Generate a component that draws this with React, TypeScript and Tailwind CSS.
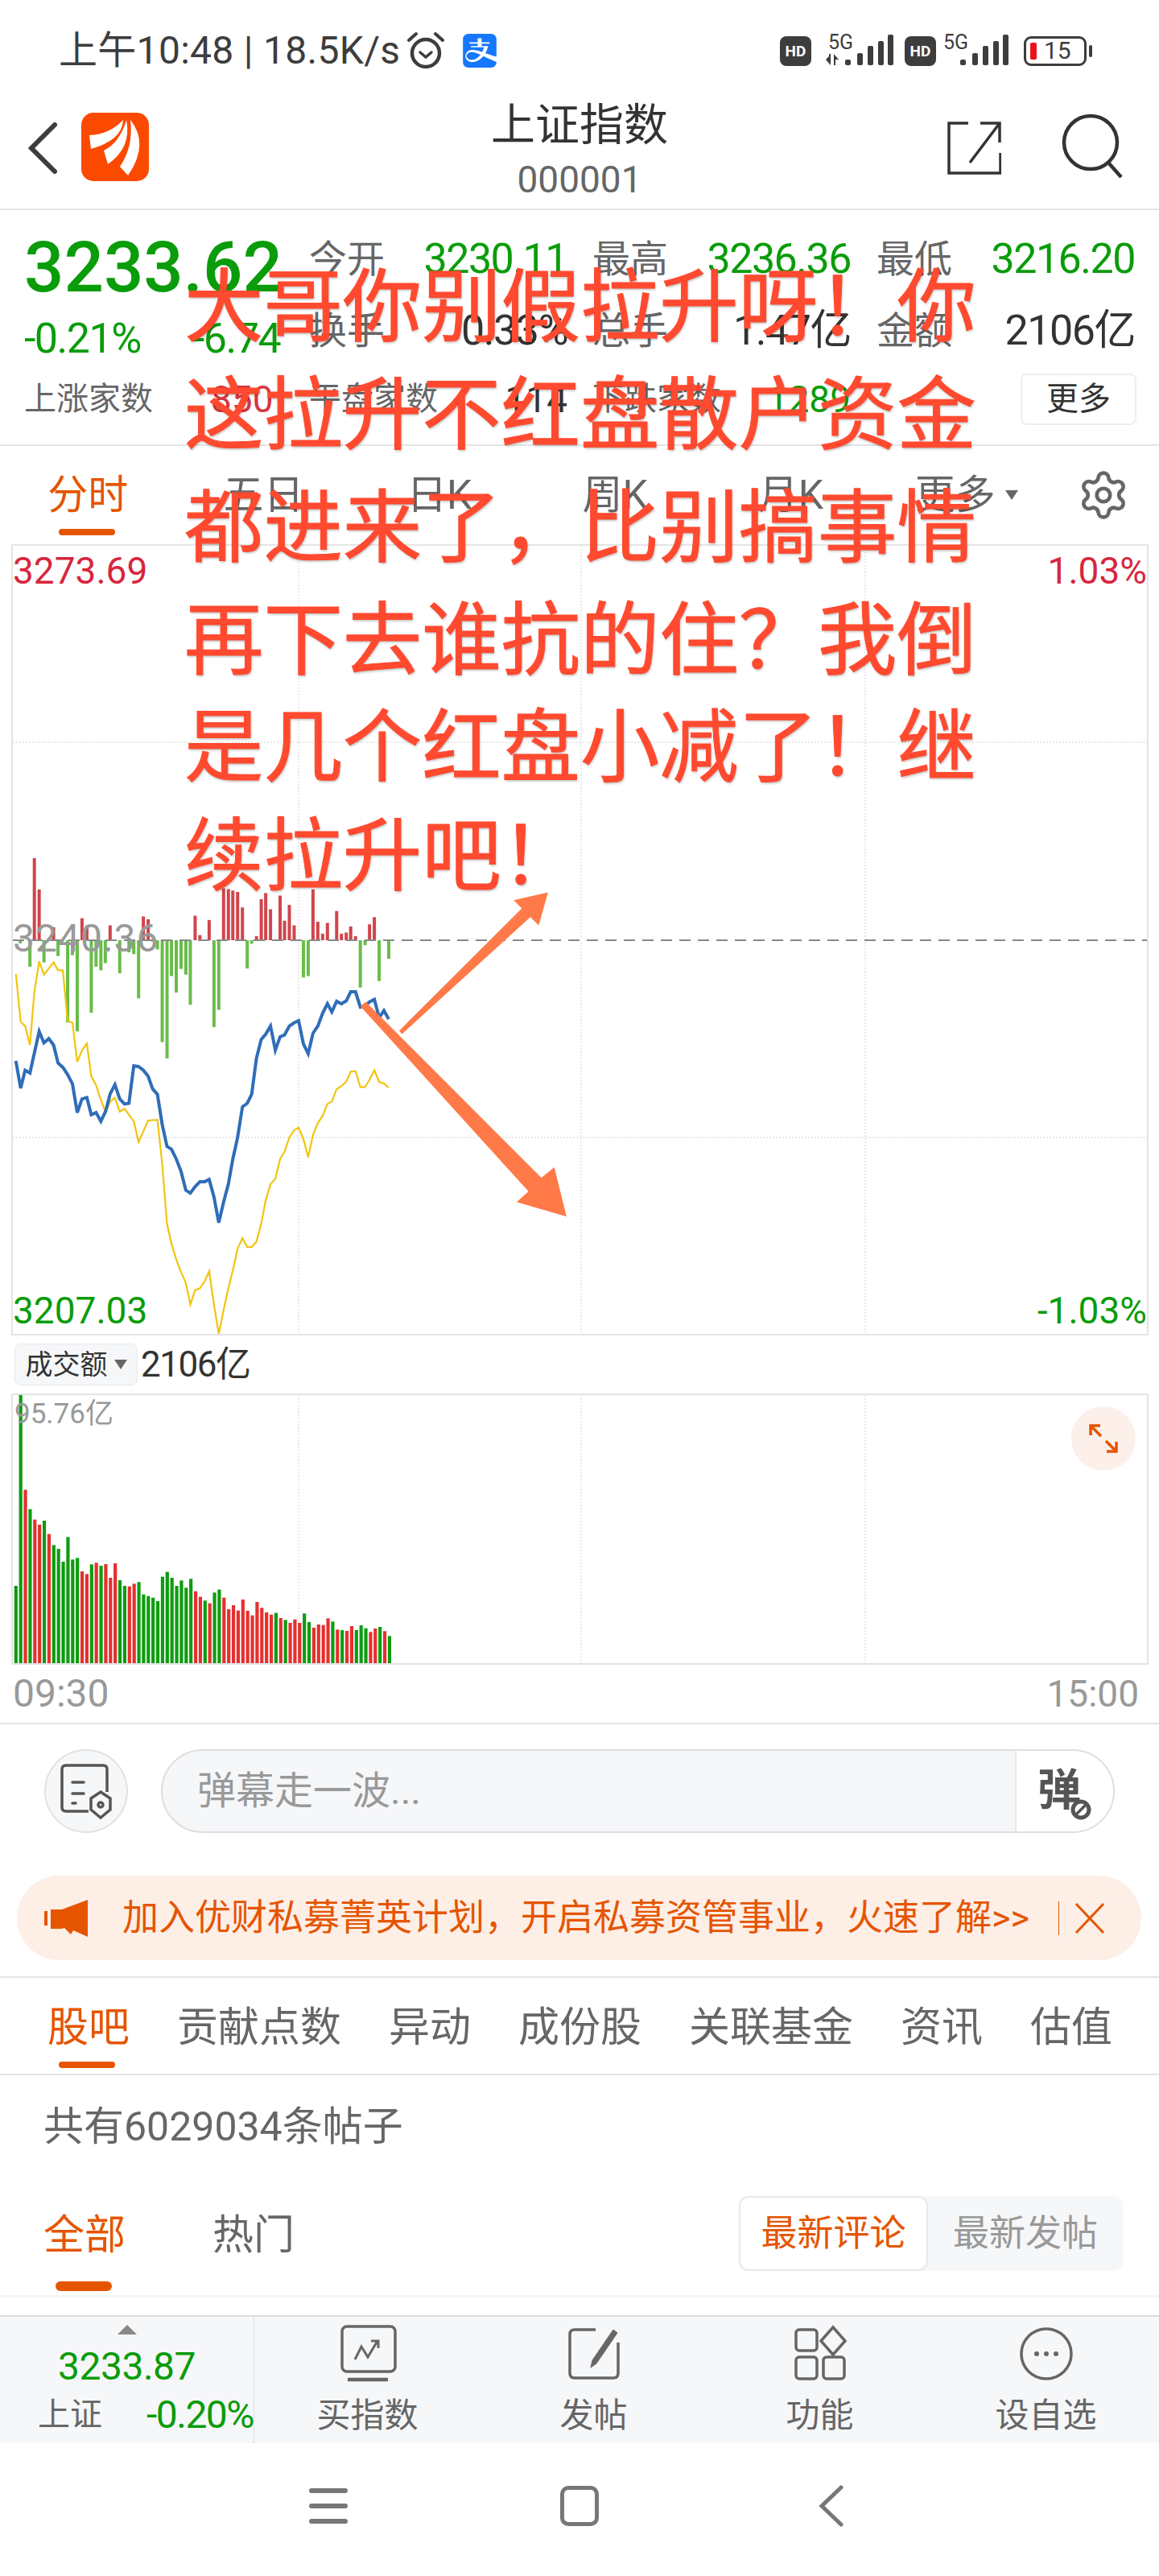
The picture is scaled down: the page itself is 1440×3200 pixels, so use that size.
import { Settings } from "lucide-react";
import { SiAlipay } from "react-icons/si";

/* ------------------------------------------------------------------ */
/*  Chart data, in page pixels after the sx / sy helpers                */
/* ------------------------------------------------------------------ */

const sx = (x: number) => x / 2.178;
const sy = (y: number) => 1000 + y / 2.24;

const bluePts = [
  [43, 712], [56, 788], [68, 738], [81, 746], [93, 690], [106, 630], [119, 662], [132, 650], [145, 668], [157, 718],
  [170, 730], [183, 750], [196, 776], [209, 856], [222, 818], [235, 814], [247, 862], [260, 856], [273, 880], [286, 852],
  [298, 804], [311, 778], [324, 818], [337, 832], [349, 830], [362, 726], [375, 728], [388, 738], [401, 755], [413, 790],
  [426, 805], [439, 890], [452, 950], [464, 958], [477, 985], [490, 1020], [503, 1072], [515, 1080], [528, 1062], [541, 1048],
  [554, 1048], [566, 1042], [579, 1090], [592, 1162], [605, 1105], [618, 1055], [630, 985], [643, 925], [656, 840], [669, 830],
  [681, 805], [694, 705], [707, 652], [719, 638], [732, 615], [745, 682], [758, 645], [770, 640], [783, 615], [796, 606],
  [808, 600], [821, 665], [834, 692], [847, 635], [860, 615], [873, 580], [886, 553], [898, 576], [911, 546], [924, 553],
  [937, 545], [949, 520], [962, 520], [975, 562], [988, 560], [1000, 548], [1013, 541], [1026, 592], [1039, 572], [1052, 596],
];

const yellowPts = [
  [43, 470], [56, 603], [68, 615], [81, 668], [93, 520], [106, 435], [119, 472], [132, 455], [145, 438], [157, 460],
  [170, 460], [183, 600], [196, 606], [209, 715], [222, 682], [235, 664], [247, 755], [260, 780], [273, 820], [286, 856],
  [298, 825], [311, 815], [324, 853], [337, 845], [349, 862], [362, 880], [375, 938], [388, 908], [401, 878], [413, 877],
  [426, 876], [439, 1000], [452, 1165], [464, 1220], [477, 1265], [490, 1300], [503, 1330], [515, 1390], [528, 1350], [541, 1345],
  [554, 1325], [566, 1297], [579, 1390], [592, 1472], [605, 1405], [618, 1345], [630, 1295], [643, 1235], [656, 1205], [669, 1230],
  [681, 1230], [694, 1215], [707, 1165], [719, 1100], [732, 1055], [745, 1040], [758, 985], [770, 965], [783, 925], [796, 905],
  [808, 898], [821, 930], [834, 980], [847, 918], [860, 885], [873, 865], [886, 832], [898, 825], [911, 790], [924, 782],
  [937, 770], [949, 742], [962, 740], [975, 785], [988, 785], [1000, 765], [1013, 738], [1026, 770], [1039, 775], [1052, 787],
];

const redBars = [
  [93, 148], [106, 235], [145, 340], [222, 315], [235, 335], [298, 335], [388, 310], [401, 318], [528, 308], [541, 362],
  [566, 320], [605, 232], [618, 234], [630, 238], [643, 242], [656, 285], [694, 365], [707, 262], [719, 245], [732, 290],
  [758, 252], [770, 322], [783, 278], [796, 335], [847, 235], [860, 325], [873, 358], [886, 328], [911, 295], [924, 358],
  [937, 355], [949, 338], [962, 365], [1000, 332], [1013, 312],
];

const greenBars = [
  [55, 385], [81, 450], [119, 438], [157, 420], [183, 605], [196, 418], [209, 630], [247, 578], [260, 450], [273, 460],
  [285, 440], [324, 468], [349, 410], [362, 415], [375, 538], [413, 380], [426, 402], [439, 660], [452, 705], [464, 476],
  [477, 522], [490, 456], [503, 472], [515, 556], [579, 618], [592, 570], [669, 455], [681, 386], [821, 480], [834, 476],
  [975, 508], [988, 390], [1026, 490], [1052, 428],
];

// top of each volume bar as read off the crop, g = green, r = red
const volumes: [number, "g" | "r"][] = [
  [990, "g"], [275, "g"], [632, "r"], [704, "g"], [743, "r"], [762, "r"], [747, "g"], [797, "r"], [838, "g"], [852, "g"],
  [900, "g"], [808, "g"], [892, "g"], [886, "g"], [936, "r"], [946, "r"], [910, "g"], [904, "r"], [915, "g"], [909, "r"],
  [960, "r"], [906, "r"], [969, "g"], [990, "g"], [992, "r"], [982, "r"], [976, "g"], [1022, "g"], [1028, "g"], [1034, "g"],
  [1047, "g"], [956, "g"], [938, "g"], [960, "g"], [990, "g"], [970, "g"], [997, "g"], [964, "g"], [1010, "r"], [1031, "r"],
  [1045, "g"], [1055, "r"], [1015, "g"], [1004, "g"], [1034, "r"], [1077, "r"], [1062, "r"], [1082, "r"], [1041, "r"], [1083, "r"],
  [1100, "r"], [1050, "r"], [1072, "r"], [1089, "r"], [1097, "r"], [1091, "g"], [1110, "r"], [1117, "g"], [1128, "r"], [1115, "r"],
  [1128, "r"], [1093, "g"], [1125, "g"], [1146, "r"], [1134, "r"], [1136, "r"], [1111, "r"], [1123, "g"], [1153, "r"], [1155, "g"],
  [1158, "r"], [1140, "r"], [1155, "g"], [1137, "g"], [1148, "g"], [1162, "r"], [1149, "r"], [1143, "g"], [1159, "r"], [1177, "g"],
];

const toLine = (pts: number[][]) => pts.map(([x, y]) => `${sx(x).toFixed(1)},${sy(y).toFixed(1)}`).join(" ");

/* ------------------------------------------------------------------ */
/*  Small drawings                                                      */
/* ------------------------------------------------------------------ */

function Alarm() {
  return (
    <svg width="52" height="50" viewBox="0 0 52 50" fill="none" stroke="#3d3d3d" strokeLinecap="round" className="ml-[6px]">
      <circle cx="26" cy="28" r="17" strokeWidth="4.5" />
      <path d="M19 27l7 6 7-6" strokeWidth="3.5" />
      <path d="M5 12l9-8M47 12l-9-8" strokeWidth="4" />
    </svg>
  );
}

function Signal({ arrows }: { arrows?: boolean }) {
  const off = arrows ? 0 : -4;
  const bars = [
    [25, 31], [40, 23], [53, 14], [66, 8], [78, 0],
  ];
  return (
    <svg width={arrows ? 86 : 82} height="40" viewBox={`0 0 ${arrows ? 86 : 82} 40`} className="overflow-visible">
      <text x={arrows ? 4 : 0} y="18" fontSize="25" fontFamily="Roboto" fill="#3d3d3d">5G</text>
      {arrows && <path d="M1 31l4-4v-3h2v14l-6-7zM11 24l6 7h-4v7h-2z" fill="#3d3d3d" />}
      {bars.map(([x, top], i) => (
        <rect key={i} x={x + off} y={top} width="7" height={38 - top} rx="2" fill="#3d3d3d" />
      ))}
    </svg>
  );
}

function Battery() {
  return (
    <div className="flex items-center gap-[3px]">
      <div className="relative flex h-[37px] w-[78px] items-center rounded-[9px] border-[3px] border-[#3d3d3d] pl-[22px] text-[30px] leading-none text-[#3d3d3d]">
        <span className="absolute left-[5px] top-[5px] h-[21px] w-[8px] rounded-[2px] bg-[#e8141c]" />
        15
      </div>
      <span className="h-[15px] w-[4px] rounded-full bg-[#3d3d3d]" />
    </div>
  );
}

function HdBadge() {
  return (
    <span className="flex h-[37px] w-[39px] items-center justify-center rounded-[8px] bg-[#3d3d3d] text-[19px] font-bold leading-none text-white">
      HD
    </span>
  );
}

function Logo() {
  return (
    <svg width="84" height="85" viewBox="0 0 84 85" className="ml-[30px]">
      <rect width="84" height="85" rx="15" fill="#fb4a00" />
      <g fill="#fff">
        <path d="M10 28q25-1 42-19q-1 25-40 36z" />
        <path d="M56 9q7 34-23 55l-5-17q20-10 28-38z" />
        <path d="M61 9q24 30-3 69l-10-11q17-25 13-58z" />
      </g>
    </svg>
  );
}

function ShareIcon() {
  return (
    <svg width="68" height="68" viewBox="0 0 68 68" fill="none" stroke="#333" strokeWidth="3.5">
      <path d="M27 3H3v62h64V40" />
      <path d="M42 3h24v24M66 3L29 52" />
    </svg>
  );
}

function SearchIcon() {
  return (
    <svg width="84" height="84" viewBox="0 0 84 84" fill="none" stroke="#333" strokeWidth="4.5">
      <circle cx="37" cy="37" r="33" />
      <path d="M59 62l16 18" />
    </svg>
  );
}

function ExpandIcon() {
  return (
    <svg width="40" height="40" viewBox="0 0 40 40" fill="none" stroke="#e55500" strokeWidth="3.5">
      <path d="M16 4H4v12M4 4l13 13M24 36h12V24M36 36L23 23" />
    </svg>
  );
}

function NoteIcon() {
  return (
    <svg width="66" height="70" viewBox="0 0 66 70" fill="none" stroke="#555" strokeWidth="3.5">
      <path d="M36 60H8q-5 0-5-5V8q0-5 5-5h46q5 0 5 5v28" />
      <path d="M16 24h14M16 38h14M16 50h4" strokeLinecap="round" />
      <path d="M51 36l12 8v14l-12 10-12-10V44z" />
      <circle cx="51" cy="52" r="3" />
    </svg>
  );
}

function DanmuOff() {
  return (
    <div className="relative text-[54px] font-bold leading-none text-[#555]">
      弹
      <svg width="28" height="28" viewBox="0 0 28 28" fill="#fff" stroke="#555" strokeWidth="5" className="absolute bottom-[-10px] right-[-14px]">
        <circle cx="14" cy="14" r="10" />
        <path d="M8 20L20 8" strokeWidth="3.5" />
      </svg>
    </div>
  );
}

function Megaphone() {
  return (
    <svg width="56" height="46" viewBox="0 0 56 46" fill="#e55500">
      <path d="M0 14h4v18H0zM8 12h14L54 0v46l-18-8-3 5-8-8-4 1H8z" />
    </svg>
  );
}

function CloseIcon() {
  return (
    <svg width="38" height="38" viewBox="0 0 38 38" stroke="#e55500" strokeWidth="3" fill="none">
      <path d="M2 1l34 36M36 1L2 37" />
    </svg>
  );
}

function BuyIcon() {
  return (
    <svg width="72" height="72" viewBox="0 0 72 72" fill="none" stroke="#666" strokeWidth="3.5">
      <rect x="4" y="2" width="66" height="56" rx="6" />
      <path d="M20 43l8-16 8 13 12-20M40 20h9v9" strokeWidth="3" />
      <path d="M11 68h50" strokeWidth="4.5" />
    </svg>
  );
}

function PostIcon() {
  return (
    <svg width="72" height="72" viewBox="0 0 72 72" fill="none" stroke="#666" strokeWidth="3.5">
      <path d="M38 6H12q-6 0-6 6v48q0 6 6 6h48q6 0 6-6V22" />
      <path d="M34 44L60 6l5 4-26 38-7 5z" fill="#666" strokeWidth="1" />
    </svg>
  );
}

function AppsIcon() {
  return (
    <svg width="72" height="72" viewBox="0 0 72 72" fill="none" stroke="#666" strokeWidth="3.5">
      <rect x="6" y="6" width="26" height="26" rx="4" />
      <path d="M52 3l15 17-15 17-15-17z" />
      <rect x="6" y="40" width="26" height="27" rx="4" />
      <rect x="40" y="40" width="26" height="27" rx="4" />
    </svg>
  );
}

function MoreIcon() {
  return (
    <svg width="72" height="72" viewBox="0 0 72 72" fill="none" stroke="#666" strokeWidth="3.5">
      <circle cx="36" cy="36" r="31" />
      <circle cx="24" cy="36" r="3" fill="#666" stroke="none" />
      <circle cx="36" cy="36" r="3" fill="#666" stroke="none" />
      <circle cx="48" cy="36" r="3" fill="#666" stroke="none" />
    </svg>
  );
}

/* ------------------------------------------------------------------ */
/*  Sections                                                            */
/* ------------------------------------------------------------------ */

function QuoteCell({ label, value, color, small }: { label: string; value: string; color: string; small?: boolean }) {
  return (
    <div className="mt-[8px] flex w-[321px] items-center justify-between">
      <span className={small ? "text-[40px] text-[#666]" : "text-[47px] text-[#666]"}>{label}</span>
      <span className={`${small ? "text-[46px]" : "text-[52px] tracking-[-1.5px]"} ${color}`}>{value}</span>
    </div>
  );
}

function MainChart() {
  return (
    <svg viewBox="16 678 1409 979" className="block h-full w-full">
      {[371, 722, 1075].map((x) => (
        <line key={x} x1={x} x2={x} y1="678" y2="1657" stroke="#e2e2e2" strokeWidth="1.5" strokeDasharray="2 2" />
      ))}
      {[922, 1413].map((y) => (
        <line key={y} x1="16" x2="1425" y1={y} y2={y} stroke="#e2e2e2" strokeWidth="1.5" strokeDasharray="2 2" />
      ))}
      {redBars.map(([x, y]) => (
        <rect key={x} x={sx(x) - 2} y={sy(y)} width="4" height={1168 - sy(y)} fill="#d0454c" />
      ))}
      {greenBars.map(([x, y]) => (
        <rect key={x} x={sx(x) - 2} y="1168" width="4" height={sy(y) - 1168} fill="#69bd4a" />
      ))}
      <line x1="16" x2="1425" y1="1168" y2="1168" stroke="#888" strokeWidth="2" strokeDasharray="14 9" />
      <polyline points={toLine(yellowPts)} fill="none" stroke="#f2c40f" strokeWidth="2.2" />
      <polyline points={toLine(bluePts)} fill="none" stroke="#2f6db8" strokeWidth="4" />
    </svg>
  );
}

function VolumeChart() {
  return (
    <svg viewBox="16 1733 1409 333" className="block h-full w-full">
      {[371, 722, 1075].map((x) => (
        <line key={x} x1={x} x2={x} y1="1733" y2="2066" stroke="#e2e2e2" strokeWidth="1.5" strokeDasharray="2 2" />
      ))}
      {volumes.map(([top, c], i) => (
        <rect
          key={i}
          x={19.7 + i * 5.875 - 2}
          y={1640 + top / 3}
          width="4.2"
          height={(1280 - top) / 3}
          fill={c === "g" ? "#0e9c10" : "#e5302f"}
        />
      ))}
    </svg>
  );
}

// hand-drawn annotation arrows and comment pasted over the screenshot
function Annotation() {
  const lines = ["大哥你别假拉升呀！你", "这拉升不红盘散户资金", "都进来了，比别搞事情", "再下去谁抗的住？我倒", "是几个红盘小减了！继", "续拉升吧！"];
  const tops = [326, 460, 600, 740, 873, 1008];
  const arrow1 = [[1080, 628], [1412, 288], [1390, 265], [1483, 243], [1458, 335], [1435, 312], [1088, 637]];
  const arrow2 = [[975, 560], [990, 548], [1465, 1037], [1500, 1008], [1533, 1145], [1398, 1105], [1430, 1075]];
  return (
    <>
      {lines.map((t, i) => (
        <div
          key={t}
          style={{ top: tops[i] }}
          className="absolute left-[229px] whitespace-nowrap text-[98.4px] leading-[114px] text-[#ff4a2f] [-webkit-text-stroke:1px_#ff4a2f] [text-shadow:1px_2px_3px_rgba(0,0,0,0.25)]"
        >
          {t}
        </div>
      ))}
      <svg width="1440" height="3200" className="pointer-events-none absolute left-0 top-0">
        <polygon points={toLine(arrow1)} fill="#ff7a48" />
        <polygon points={toLine(arrow2)} fill="#ff7a48" />
      </svg>
    </>
  );
}

function NavItem({ icon, label }: { icon: React.ReactNode; label: string }) {
  return (
    <div className="flex w-[281px] flex-col items-center pt-[10px]">
      {icon}
      <span className="mt-[16px] text-[42px] leading-[50px] text-[#666]">{label}</span>
    </div>
  );
}

export default function App() {
  return (
    <div className="relative h-[3200px] w-[1440px] overflow-hidden bg-white [font-family:Roboto,'Noto_Sans_CJK_SC',sans-serif]">
      {/* status bar */}
      <div className="flex h-[124px] items-center pt-[2px]">
        <span className="ml-[73px] whitespace-nowrap text-[48px] leading-none tracking-[0.3px] text-[#3d3d3d]">上午10:48 | 18.5K/s</span>
        <Alarm />
        <SiAlipay className="ml-[20px] h-[42px] w-[42px] text-[#1677ff]" />
        <div className="ml-auto mr-[83px] flex items-center">
          <HdBadge />
          <div className="ml-[17px]"><Signal arrows /></div>
          <div className="ml-[13px]"><HdBadge /></div>
          <div className="ml-[9px]"><Signal /></div>
          <div className="ml-[18px]"><Battery /></div>
        </div>
      </div>

      {/* title */}
      <div className="relative flex h-[137px] items-start border-b-2 border-[#e4e4e4] pt-[16px]">
        <svg width="36" height="64" viewBox="0 0 36 64" fill="none" stroke="#3d3d3d" strokeWidth="6" strokeLinecap="round" className="ml-[35px] mt-[12px]">
          <path d="M33 3L4 32l29 29" />
        </svg>
        <Logo />
        <div className="absolute left-0 top-0 flex w-full flex-col items-center">
          <span className="mt-[1px] text-[55px] leading-[60px] text-[#333]">上证指数</span>
          <span className="mt-[12px] text-[46px] leading-[52px] text-[#666]">000001</span>
        </div>
        <div className="ml-auto mr-[38px] flex items-start gap-[74px]">
          <div className="mt-[10px]"><ShareIcon /></div>
          <SearchIcon />
        </div>
      </div>

      {/* quote */}
      <div className="h-[293px] border-b-2 border-[#e4e4e4]">
        <div className="flex h-[114px] items-center pl-[30px]">
          <div className="flex h-full w-[354px] items-center pt-[28px] text-[87px] font-medium leading-none text-[#0a9c0a]">3233.62</div>
          <QuoteCell label="今开" value="3230.11" color="text-[#0a9c0a]" />
          <div className="w-[31px]" />
          <QuoteCell label="最高" value="3236.36" color="text-[#0a9c0a]" />
          <div className="w-[32px]" />
          <QuoteCell label="最低" value="3216.20" color="text-[#0a9c0a]" />
        </div>
        <div className="flex h-[64px] items-center pl-[30px]">
          <div className="flex w-[354px] items-center pt-[28px] text-[52px] tracking-[-1.5px] text-[#0a9c0a]">
            <span className="w-[210px]">-0.21%</span>
            <span>-6.74</span>
          </div>
          <QuoteCell label="换手" value="0.33%" color="text-[#333]" />
          <div className="w-[31px]" />
          <QuoteCell label="总手" value="1.47亿" color="text-[#333]" />
          <div className="w-[32px]" />
          <QuoteCell label="金额" value="2106亿" color="text-[#333]" />
        </div>
        <div className="flex h-[106px] items-center pl-[30px]">
          <div className="mt-[8px] flex w-[354px] items-center">
            <span className="w-[232px] text-[40px] text-[#666]">上涨家数</span>
            <span className="text-[46px] text-[#d9363e]">850</span>
          </div>
          <QuoteCell small label="平盘家数" value="114" color="text-[#333]" />
          <div className="w-[31px]" />
          <QuoteCell small label="下跌家数" value="1289" color="text-[#0a9c0a]" />
          <div className="ml-auto mr-[28px] mt-[8px] flex h-[64px] w-[144px] items-center justify-center rounded-[8px] border-2 border-[#eee] text-[40px] text-[#333]">更多</div>
        </div>
      </div>

      {/* chart tabs */}
      <div className="flex h-[122px]">
        <div className="grid w-[1310px] grid-cols-6 text-[50px] text-[#666]">
          <div className="relative flex h-[122px] items-center justify-center text-[#e55500]">
            分时
            <span className="absolute bottom-[11px] left-[73px] h-[8px] w-[70px] rounded-full bg-[#e55500]" />
          </div>
          <div className="flex items-center justify-center">五日</div>
          <div className="flex items-center justify-center">日K</div>
          <div className="flex items-center justify-center">周K</div>
          <div className="flex items-center justify-center">月K</div>
          <div className="flex items-center justify-center">
            更多
            <span className="ml-[12px] h-0 w-0 border-x-[8px] border-t-[12px] border-x-transparent border-t-[#666]" />
          </div>
        </div>
        <div className="ml-[28px] flex items-center">
          <Settings size={66} strokeWidth={1.7} color="#666" />
        </div>
      </div>

      {/* intraday chart */}
      <div className="relative mx-[14px] h-[983px] w-[1413px] border-2 border-[#e4e4e4]">
        <MainChart />
        <span className="absolute left-0 top-[6px] text-[46px] leading-[50px] text-[#d7263d]">3273.69</span>
        <span className="absolute right-0 top-[6px] text-[46px] leading-[50px] text-[#d7263d]">1.03%</span>
        <span className="absolute left-0 top-[463px] text-[48px] leading-[50px] tracking-[1px] text-[#999]">3240.36</span>
        <span className="absolute bottom-[4px] left-0 text-[46px] leading-[50px] text-[#0a9c0a]">3207.03</span>
        <span className="absolute bottom-[4px] right-0 text-[46px] leading-[50px] text-[#0a9c0a]">-1.03%</span>
      </div>

      {/* volume header */}
      <div className="flex h-[72px] items-center pl-[18px]">
        <div className="flex h-[52px] w-[153px] items-center justify-center gap-[8px] rounded-[8px] border border-[#e8e8e8] bg-[#f6f7f9] text-[34px] text-[#333]">
          成交额
          <span className="h-0 w-0 border-x-[8px] border-t-[12px] border-x-transparent border-t-[#666]" />
        </div>
        <span className="ml-[4px] text-[44px] tracking-[-1.5px] text-[#333]">2106亿</span>
      </div>

      {/* volume chart */}
      <div className="relative mx-[14px] h-[337px] w-[1413px] border-2 border-[#e4e4e4]">
        <VolumeChart />
        <span className="absolute left-[2px] top-[2px] text-[35px] leading-[44px] text-[#999]">95.76亿</span>
        <div className="absolute right-[14px] top-[14px] flex h-[80px] w-[80px] items-center justify-center rounded-full bg-[#fdf0ea]">
          <ExpandIcon />
        </div>
      </div>

      {/* time axis */}
      <div className="flex h-[74px] items-center justify-between border-b-2 border-[#e4e4e4] pl-[16px] pr-[25px] text-[48px] text-[#999]">
        <span>09:30</span>
        <span className="text-[46px]">15:00</span>
      </div>

      {/* danmu input */}
      <div className="flex h-[188px] items-start pt-[31px]">
        <div className="ml-[55px] flex h-[104px] w-[104px] items-center justify-center rounded-full border-2 border-[#e2e2e2] bg-[#f6f7f9]">
          <NoteIcon />
        </div>
        <div className="ml-[41px] flex h-[104px] w-[1185px] overflow-hidden rounded-full border-2 border-[#dedede] bg-[#f6f7f9]">
          <div className="flex flex-1 items-center pl-[43px] text-[48px] text-[#999]">弹幕走一波...</div>
          <div className="flex w-[122px] items-center justify-center border-l-2 border-[#e8e8e8] bg-white pr-[14px]">
            <DanmuOff />
          </div>
        </div>
      </div>

      {/* banner */}
      <div className="mx-[21px] flex h-[105px] w-[1397px] items-center rounded-full bg-[#fdeee6] pl-[34px] text-[45px] text-[#e55500]">
        <Megaphone />
        <span className="ml-[41px] w-[1132px] whitespace-nowrap">加入优财私募菁英计划，开启私募资管事业，火速了解&gt;&gt;</span>
        <span className="ml-[31px] h-[42px] w-[1px] bg-[#e55500]" />
        <span className="ml-[19px]"><CloseIcon /></span>
      </div>

      {/* stock tabs */}
      <div className="mt-[20px] flex h-[123px] items-center gap-[59px] border-y-2 border-[#e4e4e4] pl-[59px] pt-[6px] text-[51px] text-[#666]">
        <span className="relative text-[#e55500]">
          股吧
          <span className="absolute bottom-[-11px] left-[14px] h-[8px] w-[70px] rounded-full bg-[#e55500]" />
        </span>
        <span>贡献点数</span>
        <span>异动</span>
        <span>成份股</span>
        <span>关联基金</span>
        <span>资讯</span>
        <span>估值</span>
      </div>

      {/* post count */}
      <div className="flex h-[121px] items-center pl-[54px] pt-[8px] text-[50px] text-[#666]">共有6029034条帖子</div>

      {/* comment filters */}
      <div className="relative flex h-[152px] items-start pl-[54px] pt-[26px] text-[51px] text-[#666]">
        <span className="relative mt-[14px] text-[#e55500]">
          全部
          <span className="absolute bottom-[-30px] left-[15px] h-[12px] w-[70px] rounded-full bg-[#e55500]" />
        </span>
        <span className="ml-[108px] mt-[14px]">热门</span>
        <div className="ml-auto mr-[45px] mt-[3px] flex h-[93px] w-[477px] rounded-[12px] bg-[#f6f7f9] text-[45px]">
          <div className="flex w-[235px] items-center justify-center rounded-[12px] border-2 border-[#e8e8e8] bg-white text-[#e55500]">最新评论</div>
          <div className="flex flex-1 items-center justify-center text-[#999]">最新发帖</div>
        </div>
      </div>
      <div className="h-[3px] bg-[#f5f5f5]" />
      <div className="h-[22px]" />

      {/* bottom toolbar */}
      <div className="flex h-[159px] border-t-2 border-[#dcdcdc] bg-[#f6f7f9]">
        <div className="flex w-[316px] flex-col items-center border-r border-[#dcdcdc]">
          <span className="mt-[10px] h-0 w-0 border-x-[12px] border-b-[12px] border-x-transparent border-b-[#888]" />
          <span className="mt-[14px] text-[48px] leading-[52px] tracking-[-0.5px] text-[#0a9c0a]">3233.87</span>
          <div className="mt-[8px] flex w-full items-center justify-between pl-[47px] leading-[52px]">
            <span className="text-[40px] text-[#666]">上证</span>
            <span className="text-[48px] tracking-[-1.5px] text-[#0a9c0a]">-0.20%</span>
          </div>
        </div>
        <NavItem icon={<BuyIcon />} label="买指数" />
        <NavItem icon={<PostIcon />} label="发帖" />
        <NavItem icon={<AppsIcon />} label="功能" />
        <NavItem icon={<MoreIcon />} label="设自选" />
      </div>

      {/* system nav */}
      <div className="flex h-[165px] items-center pb-[10px]">
        <div className="ml-[384px] flex w-[48px] flex-col gap-[13px]">
          <span className="h-[6px] rounded-full bg-[#777]" />
          <span className="h-[6px] rounded-full bg-[#777]" />
          <span className="h-[6px] rounded-full bg-[#777]" />
        </div>
        <div className="ml-[264px] h-[50px] w-[48px] rounded-[10px] border-[5px] border-[#777]" />
        <svg width="32" height="52" viewBox="0 0 32 52" fill="none" stroke="#777" strokeWidth="5" strokeLinecap="round" className="ml-[272px]">
          <path d="M29 3L5 26l24 23" />
        </svg>
      </div>

      <Annotation />
    </div>
  );
}
